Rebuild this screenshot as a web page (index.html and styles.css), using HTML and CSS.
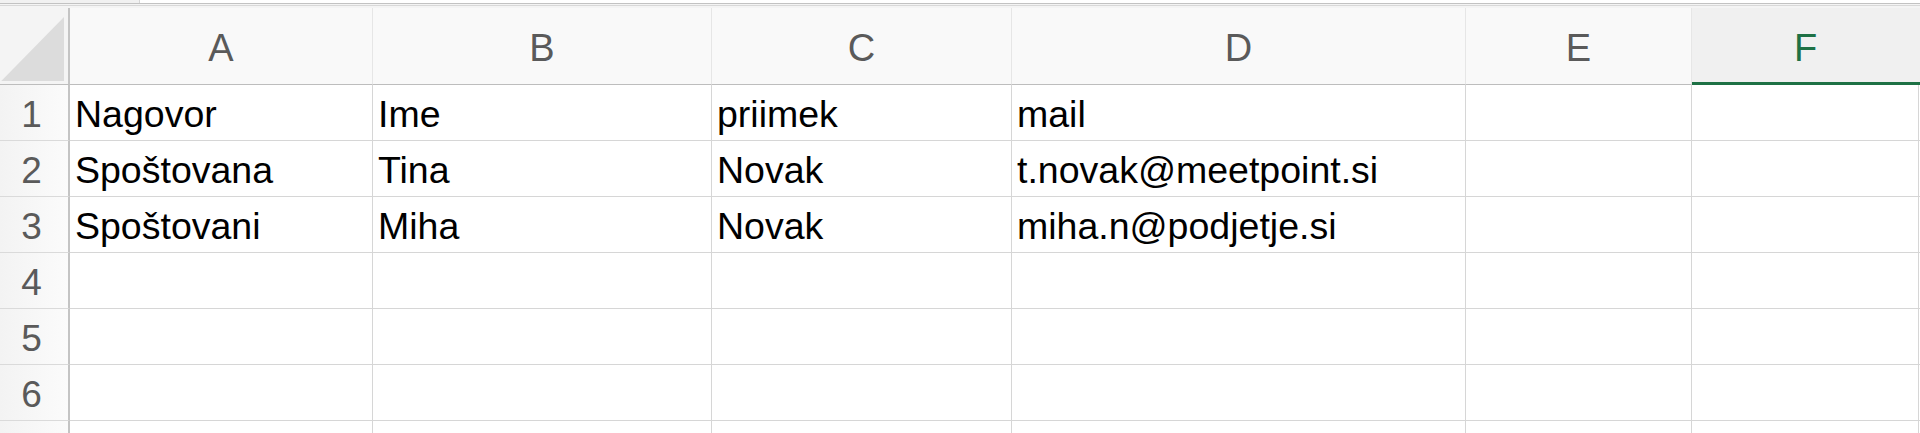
FILE: index.html
```html
<!DOCTYPE html>
<html lang="sl">
<head>
<meta charset="utf-8">
<title>Sheet</title>
<link rel="stylesheet" href="styles.css">
</head>
<body>
<div class="topbar">
  <div class="namebox"></div>
</div>
<div class="sheet">
  <div class="corner"><div class="tri"></div></div>
  <div class="colhead">A</div>
  <div class="colhead">B</div>
  <div class="colhead">C</div>
  <div class="colhead">D</div>
  <div class="colhead">E</div>
  <div class="colhead active">F</div>

  <div class="rowhead">1</div>
  <div class="cell">Nagovor</div>
  <div class="cell">Ime</div>
  <div class="cell">priimek</div>
  <div class="cell">mail</div>
  <div class="cell"></div>
  <div class="cell"></div>
  <div class="cell"></div>

  <div class="rowhead">2</div>
  <div class="cell">Spoštovana</div>
  <div class="cell">Tina</div>
  <div class="cell">Novak</div>
  <div class="cell">t.novak@meetpoint.si</div>
  <div class="cell"></div>
  <div class="cell"></div>
  <div class="cell"></div>

  <div class="rowhead">3</div>
  <div class="cell">Spoštovani</div>
  <div class="cell">Miha</div>
  <div class="cell">Novak</div>
  <div class="cell">miha.n@podjetje.si</div>
  <div class="cell"></div>
  <div class="cell"></div>
  <div class="cell"></div>

  <div class="rowhead">4</div>
  <div class="cell"></div><div class="cell"></div><div class="cell"></div><div class="cell"></div><div class="cell"></div><div class="cell"></div><div class="cell"></div>

  <div class="rowhead">5</div>
  <div class="cell"></div><div class="cell"></div><div class="cell"></div><div class="cell"></div><div class="cell"></div><div class="cell"></div><div class="cell"></div>

  <div class="rowhead">6</div>
  <div class="cell"></div><div class="cell"></div><div class="cell"></div><div class="cell"></div><div class="cell"></div><div class="cell"></div><div class="cell"></div>

  <div class="rowhead"></div>
  <div class="cell"></div><div class="cell"></div><div class="cell"></div><div class="cell"></div><div class="cell"></div><div class="cell"></div><div class="cell"></div>
</div>
</body>
</html>
```

FILE: styles.css
```css
* { box-sizing: border-box; }
html, body {
  margin: 0;
  padding: 0;
  background: #ffffff;
  overflow: hidden;
  height: 433px;
}
body {
  font-family: "Liberation Sans", Arial, sans-serif;
}
.topbar {
  height: 8px;
  background: #f4f4f4;
  border-top: 3px solid #ffffff;
  box-shadow: inset 0 1px 0 #c2c2c2, inset 0 2px 0 #f4f4f4, inset 0 3px 0 #d8d8d8;
  position: relative;
}
.namebox {
  position: absolute;
  left: 0;
  top: -3px;
  width: 140px;
  height: 3px;
  background: #f1f1f1;
  border-right: 1px solid #d6d6d6;
}
.sheet {
  display: grid;
  grid-template-columns: 70px 303px 339px 300px 454px 226px 227px 1fr;
  grid-template-rows: 77px repeat(7, 56px);
}
.corner {
  background: #f4f4f4;
  border-right: 2px solid #c4c4c4;
  border-bottom: 1px solid #bdbdbd;
  display: flex;
  align-items: flex-end;
  padding-bottom: 3px;
}
.tri {
  width: 64px;
  height: 64px;
  background: #dcdcdc;
  clip-path: polygon(100% 0, 100% 100%, 2% 100%);
}
.colhead {
  background: #f9f9f9;
  border-right: 1px solid #e6e6e6;
  border-bottom: 1px solid #bdbdbd;
  display: flex;
  align-items: center;
  justify-content: center;
  font-size: 38px;
  line-height: 1;
  padding-top: 4px;
  color: #5a5a5a;
}
.colhead.active {
  grid-column: span 2;
  background: #f0f0f0;
  color: #1e7145;
  border-bottom: 3px solid #1e7145;
  padding-top: 6px;
  justify-content: flex-start;
  padding-left: 102px;
}
.rowhead {
  background: linear-gradient(to right, #f3f3f3, #fbfbfb);
  border-right: 2px solid #c4c4c4;
  border-bottom: 1px solid #dadada;
  display: flex;
  align-items: flex-end;
  justify-content: center;
  padding-right: 5px;
  padding-bottom: 7px;
  font-size: 37px;
  line-height: 1;
  color: #5a5a5a;
}
.cell {
  border-right: 1px solid #d6d6d6;
  border-bottom: 1px solid #d6d6d6;
  display: flex;
  align-items: flex-end;
  padding-left: 5px;
  padding-bottom: 7px;
  font-size: 37.5px;
  line-height: 1;
  color: #000000;
  white-space: nowrap;
  overflow: hidden;
}
```
